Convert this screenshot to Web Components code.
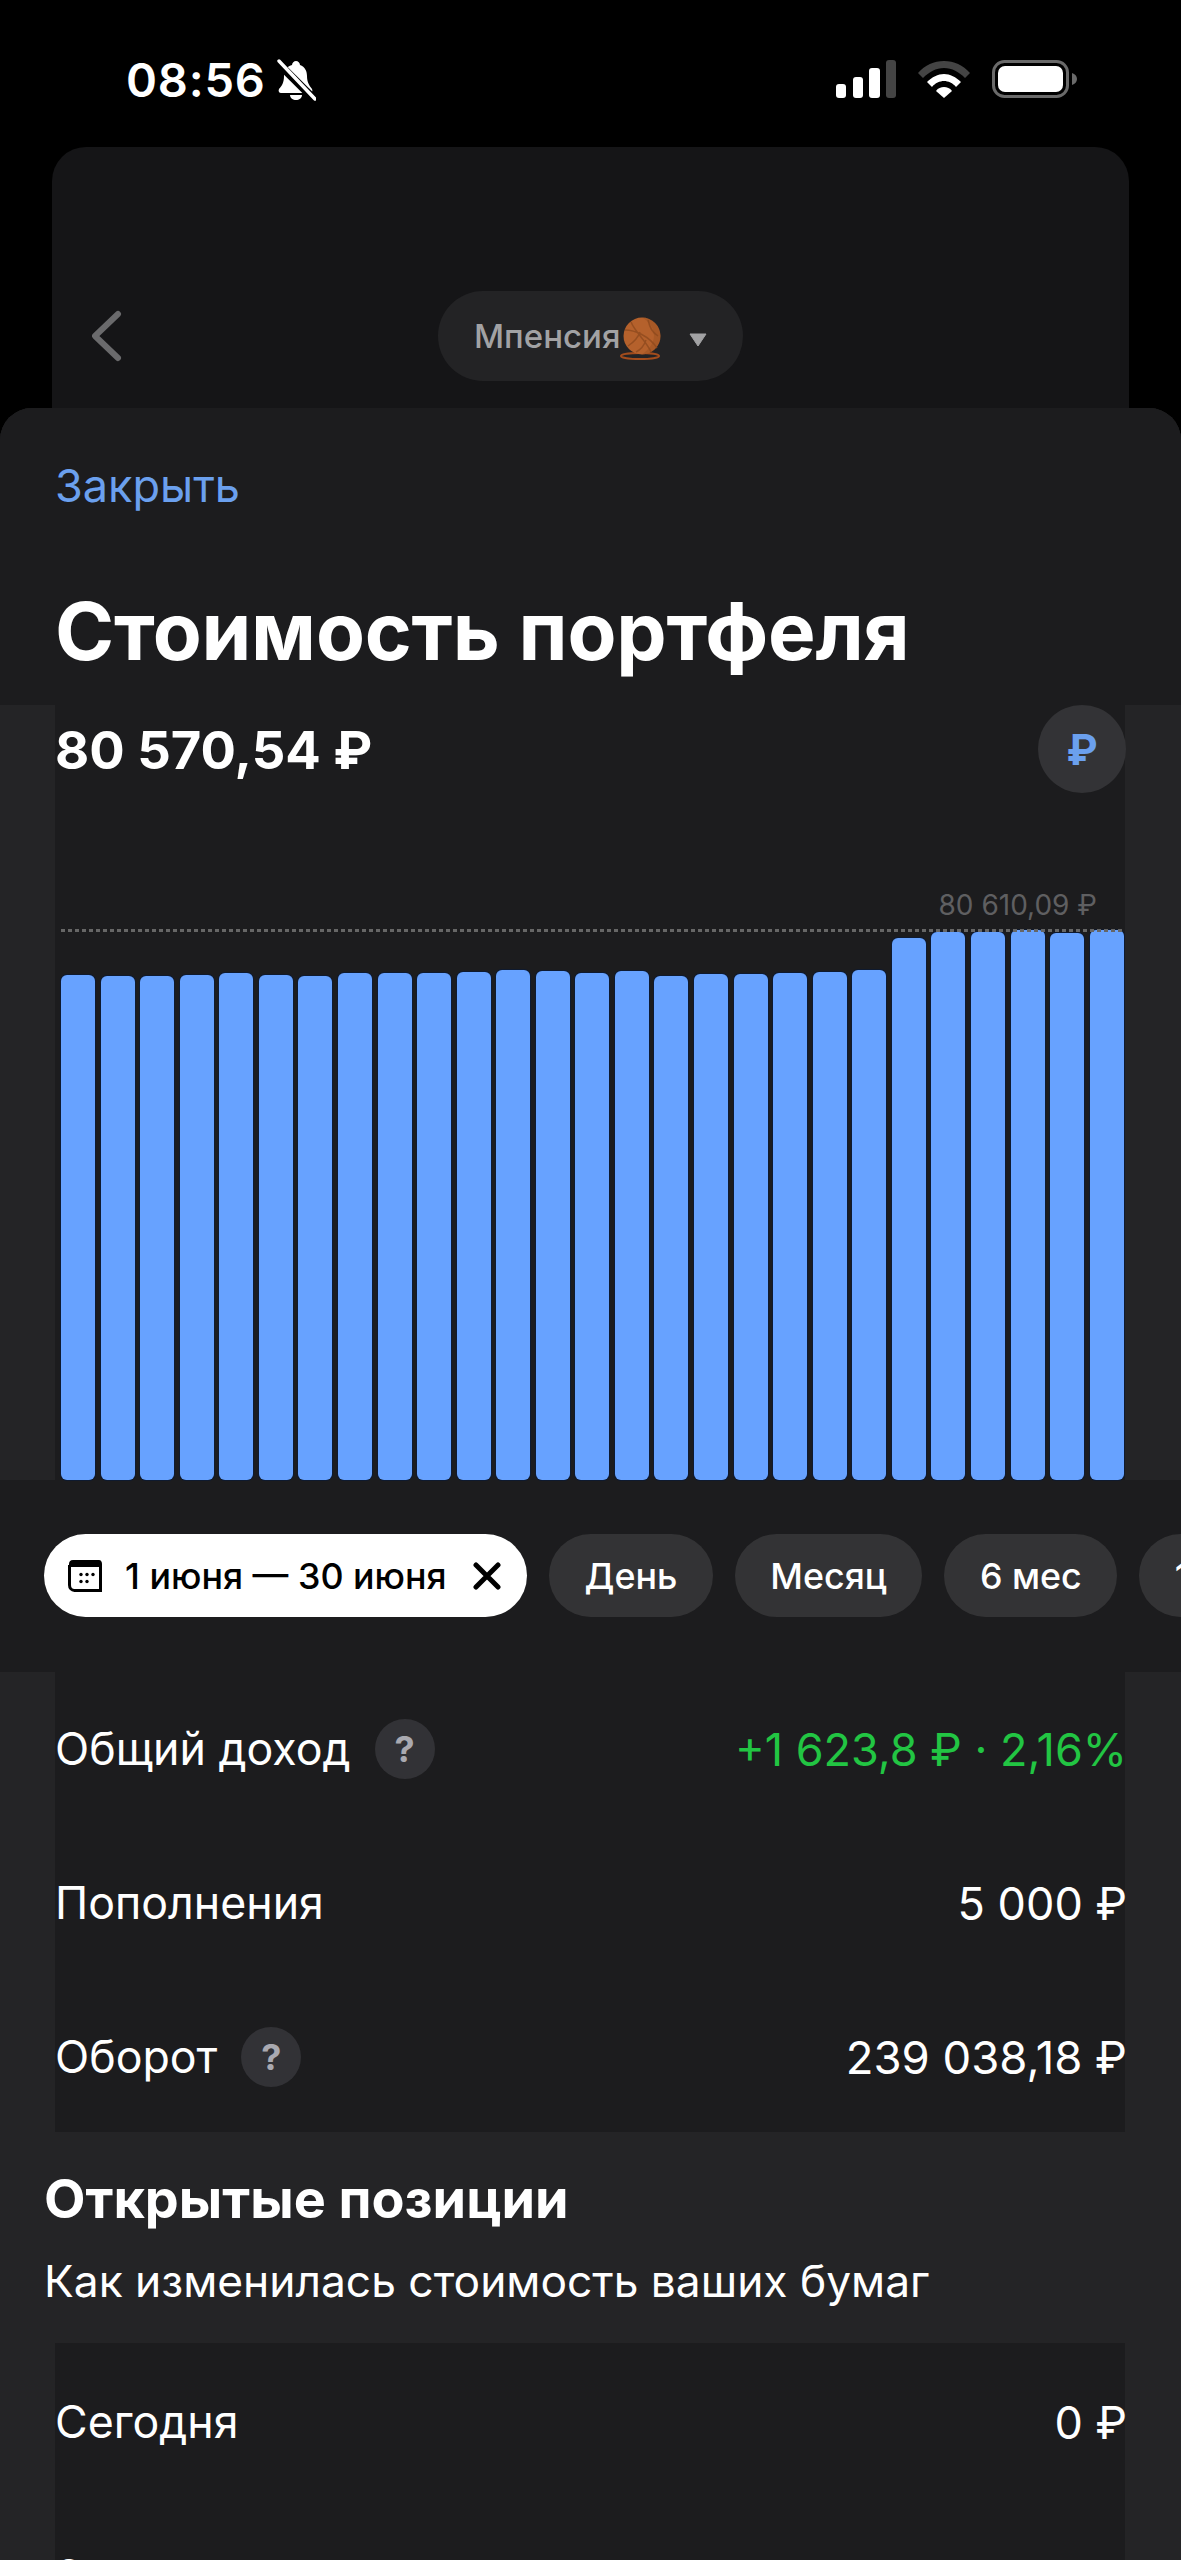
<!DOCTYPE html>
<html lang="ru">
<head>
<meta charset="utf-8">
<title>Стоимость портфеля</title>
<style>
  html, body {
    margin: 0;
    background: #000;
    font-family: Inter, "Liberation Sans", sans-serif;
    color: #fff;
  }
  body {
    width: 1181px;
    height: 2560px;
    overflow: hidden;
  }
</style>
</head>
<body>
<status-bar></status-bar>
<back-screen>Мпенсия</back-screen>
<portfolio-sheet>
  <sheet-head>Стоимость портфеля</sheet-head>
  <value-chart amount="80 570,54 ₽" peak="80 610,09 ₽"></value-chart>
  <period-chips></period-chips>
  <row-card pad-top="0" height="460">
    <metric-row help value="+1 623,8 ₽ · 2,16%" tone="up">Общий доход</metric-row>
    <metric-row value="5 000 ₽">Пополнения</metric-row>
    <metric-row help value="239 038,18 ₽" wide>Оборот</metric-row>
  </row-card>
  <section-title sub="Как изменилась стоимость ваших бумаг">Открытые позиции</section-title>
  <row-card pad-top="2" height="400">
    <metric-row value="0 ₽">Сегодня</metric-row>
    <metric-row value="6 087,19 ₽" tone="up">За все время</metric-row>
  </row-card>
</portfolio-sheet>

<script>
class StatusBar extends HTMLElement {
  constructor() {
    super();
    this.attachShadow({ mode: 'open' });
  }

  connectedCallback() {
    this.shadowRoot.innerHTML = `
      <style>
        :host {
          display: flex;
          justify-content: space-between;
          align-items: flex-start;
          height: 147px;
          box-sizing: border-box;
          padding: 54px 103px 0 126px;
          background: #000;
        }
        .time {
          display: flex;
          align-items: center;
          gap: 10px;
          font-size: 47px;
          line-height: 52px;
          font-weight: 600;
          letter-spacing: 0.8px;
        }
        .icons {
          display: flex;
          align-items: center;
          gap: 22px;
          padding-top: 6px;
        }
        svg { display: block; }
      </style>
      <div class="time">
        <span>08:56</span>
        <svg width="40" height="42" viewBox="0 0 40 42">
          <path fill="#fff" d="M20 2c2 0 4 2 4 4 5 2 7 6 7 11 0 6 2 9 5 13 1 2 0 4-2 4H5c-2 0-3-2-2-4 3-3 5-7 5-13 0-5 2-9 8-11 0-2 2-4 4-4z"/>
          <path fill="#fff" d="M14 36h12c0 3-3 5-6 5s-6-2-6-5z"/>
          <path stroke="#000" stroke-width="8" d="M1 3l38 38"/>
          <path stroke="#fff" stroke-width="3.4" stroke-linecap="round" d="M3 2l36 38"/>
        </svg>
      </div>
      <div class="icons">
        <svg width="60" height="38" viewBox="0 0 60 38">
          <rect x="0" y="24" width="10" height="14" rx="3" fill="#fff"/>
          <rect x="17" y="17" width="10" height="21" rx="3" fill="#fff"/>
          <rect x="33" y="8" width="11" height="30" rx="3" fill="#fff"/>
          <rect x="50" y="0" width="10" height="38" rx="3" fill="#444"/>
        </svg>
        <svg width="52" height="38" viewBox="0 0 52 38">
          <path fill="#444" d="M0 13C7 5 16 1 26 1s19 4 26 12l-5 5C41 12 34 8 26 8S11 12 5 18z"/>
          <path fill="#fff" d="M9 22c5-5 11-8 17-8s12 3 17 8l-5 5c-3-4-8-6-12-6s-9 2-12 6z"/>
          <path fill="#fff" d="M18 31c2-3 5-4 8-4s6 1 8 4l-8 7z"/>
        </svg>
        <svg width="86" height="38" viewBox="0 0 86 38">
          <rect x="1.5" y="1.5" width="74" height="35" rx="11" fill="none" stroke="#6a6a6a" stroke-width="3"/>
          <rect x="6" y="6" width="65" height="26" rx="7" fill="#fff"/>
          <path fill="#6a6a6a" d="M80 13c3 1 5 3 5 6s-2 5-5 6z"/>
        </svg>
      </div>
    `;
  }
}

class BackScreen extends HTMLElement {
  constructor() {
    super();
    this.attachShadow({ mode: 'open' });
  }

  connectedCallback() {
    this.shadowRoot.innerHTML = `
      <style>
        :host {
          display: block;
          height: 261px;
          margin: 0 52px;
          box-sizing: border-box;
          padding-top: 144px;
          background: #151517;
          border-radius: 34px 34px 0 0;
        }
        .bar {
          display: grid;
          grid-template-columns: 1fr auto 1fr;
          align-items: center;
          padding: 0 40px;
        }
        .pill {
          display: flex;
          align-items: center;
          height: 90px;
          width: 305px;
          box-sizing: border-box;
          padding: 0 0 0 36px;
          border-radius: 45px;
          background: #232325;
          color: #a2a2a4;
          font-size: 33px;
          font-weight: 500;
        }
        svg { display: block; }
        .ball { margin-left: 0; margin-top: 4px; }
        .tri { margin-left: 27px; margin-top: 8px; }
      </style>
      <div class="bar">
        <svg width="30" height="52" viewBox="0 0 30 52">
          <path d="M26 4L3 26l23 22" fill="none" stroke="#6a6a6c" stroke-width="6" stroke-linecap="round" stroke-linejoin="round"/>
        </svg>
        <div class="pill">
          <span><slot></slot></span>
          <svg class="ball" width="42" height="44" viewBox="0 0 42 44">
            <ellipse cx="20" cy="40" rx="19" ry="3" fill="none" stroke="#a34c1c" stroke-width="2"/>
            <circle cx="22" cy="20" r="18.500" fill="#b5612c"/>
            <path d="M5 14c10 0 24 6 32 18M11 6c4 10 16 20 20 30M28 4c2 8 4 12 10 16M8 30c6-4 10-8 12-14M16 36c4-2 8-6 10-12" fill="none" stroke="#8f4a1e" stroke-width="1.500" opacity="0.8"/>
            <path d="M22 1.500a18.500 18.500 0 0 1 0 37c8-6 12-12 12-19S30 6 22 1.500z" fill="#8f4a1e" opacity="0.35"/>
          </svg>
          <svg class="tri" width="18" height="14" viewBox="0 0 18 14">
            <path d="M1 1h16L9 13z" fill="#a2a2a4" stroke="#a2a2a4" stroke-linejoin="round"/>
          </svg>
        </div>
        <span></span>
      </div>
    `;
  }
}

class PortfolioSheet extends HTMLElement {
  constructor() {
    super();
    this.attachShadow({ mode: 'open' });
  }

  connectedCallback() {
    this.shadowRoot.innerHTML = `
      <style>
        :host {
          display: block;
          height: 2152px;
          overflow: hidden;
          background: #242426;
          border-radius: 32px 32px 0 0;
        }
      </style>
      <slot></slot>
    `;
  }
}

class SheetHead extends HTMLElement {
  constructor() {
    super();
    this.attachShadow({ mode: 'open' });
  }

  connectedCallback() {
    this.shadowRoot.innerHTML = `
      <style>
        :host {
          display: block;
          height: 297px;
          box-sizing: border-box;
          padding: 49px 0 0 55px;
          background: #1c1c1e;
        }
        .close {
          font-size: 45px;
          line-height: 58px;
          color: #6ba0ee;
        }
        h1 {
          margin: 69px 0 0;
          font-size: 80px;
          line-height: 94px;
          font-weight: 700;
          letter-spacing: -0.2px;
          color: #fff;
        }
      </style>
      <div class="close">Закрыть</div>
      <h1><slot></slot></h1>
    `;
  }
}

class ValueChart extends HTMLElement {
  constructor() {
    super();
    this.attachShadow({ mode: 'open' });
  }

  connectedCallback() {
    const tops = [975, 976, 976, 975, 973, 975, 976, 973, 973, 973, 972, 970, 971, 973, 971, 976, 974, 974, 973, 972, 970, 938, 932, 932, 930, 933, 930];
    const bars = tops.map((t) => `<i style="height:${1480 - t}px"></i>`).join('');
    this.shadowRoot.innerHTML = `
      <style>
        :host {
          display: block;
          height: 775px;
          margin: 0 56px 0 55px;
          background: #1c1c1e;
        }
        .top {
          display: flex;
          justify-content: space-between;
          align-items: flex-start;
          height: 175px;
        }
        .amount {
          font-size: 52.600px;
          line-height: 60px;
          font-weight: 700;
          padding-top: 15px;
        }
        .cur {
          width: 88px;
          height: 88px;
          margin-right: -1px;
          border-radius: 50%;
          background: #333336;
          color: #6ba0ee;
          display: flex;
          align-items: center;
          justify-content: center;
          font-size: 42px;
          font-weight: 700;
        }
        .peak {
          height: 50px;
          box-sizing: border-box;
          padding-right: 28px;
          padding-top: 8px;
          text-align: right;
          font-size: 28px;
          line-height: 34px;
          color: #5f5f61;
        }
        .plot {
          height: 550px;
          display: flex;
          flex-direction: column;
          justify-content: flex-end;
          margin: 0 1px 0 6px;
          position: relative;
        }
        .line {
          position: absolute;
          top: -1px;
          left: 0;
          right: 0;
          height: 3px;
          background: repeating-linear-gradient(90deg, #666 0 4px, transparent 4px 7px);
        }
        .bars {
          display: flex;
          align-items: flex-end;
          justify-content: space-between;
        }
        i {
          display: block;
          width: 34px;
          background: #67a2ff;
          border-radius: 6px;
          box-shadow: 0 0 0 1px #0e1a30;
        }
      </style>
      <div class="top">
        <div class="amount">${this.getAttribute('amount')}</div>
        <div class="cur">₽</div>
      </div>
      <div class="peak">${this.getAttribute('peak')}</div>
      <div class="plot">
        <div class="line"></div>
        <div class="bars">${bars}</div>
      </div>
    `;
  }
}

class PeriodChips extends HTMLElement {
  constructor() {
    super();
    this.attachShadow({ mode: 'open' });
  }

  connectedCallback() {
    this.shadowRoot.innerHTML = `
      <style>
        :host {
          display: block;
          height: 192px;
          box-sizing: border-box;
          padding: 54px 0 0 44px;
          background: #1c1c1e;
          overflow: hidden;
        }
        .row {
          display: flex;
          gap: 22px;
          width: max-content;
        }
        .chip {
          display: flex;
          align-items: center;
          height: 83px;
          box-sizing: border-box;
          padding: 0 35.500px;
          border-radius: 42px;
          background: #333335;
          color: #fff;
          font-size: 35.800px;
          font-weight: 500;
        }
        .on {
          width: 483px;
          padding: 0 26px 0 23px;
          background: #fff;
          color: #000;
        }
        .on span {
          margin: 0 auto 0 22px;
        }
        svg { display: block; flex: none; }
      </style>
      <div class="row">
        <div class="chip on">
          <svg width="36" height="34" viewBox="0 0 36 34">
            <path d="M2 8V5c0-2 1-4 4-4h26c2 0 3 2 3 4v3z" fill="#000"/>
            <path d="M2.500 6v20c0 3 2 5.500 5 5.500h26V6" fill="none" stroke="#000" stroke-width="3"/>
            <g fill="#000">
              <circle cx="14" cy="15.500" r="1.700"/><circle cx="20" cy="15.500" r="1.700"/><circle cx="26" cy="15.500" r="1.700"/>
              <circle cx="14" cy="22.500" r="1.700"/><circle cx="20" cy="22.500" r="1.700"/>
            </g>
          </svg>
          <span>1 июня — 30 июня</span>
          <svg width="28" height="28" viewBox="0 0 28 28">
            <path d="M3 3l22 22M25 3L3 25" stroke="#000" stroke-width="5" stroke-linecap="round"/>
          </svg>
        </div>
        <div class="chip">День</div>
        <div class="chip">Месяц</div>
        <div class="chip">6 мес</div>
        <div class="chip">1 год</div>
      </div>
    `;
  }
}

class RowCard extends HTMLElement {
  constructor() {
    super();
    this.attachShadow({ mode: 'open' });
  }

  connectedCallback() {
    this.shadowRoot.innerHTML = `
      <style>
        :host {
          display: block;
          height: ${this.getAttribute('height')}px;
          box-sizing: border-box;
          margin: 0 56px 0 55px;
          padding-top: ${this.getAttribute('pad-top')}px;
          background: #1c1c1e;
        }
      </style>
      <slot></slot>
    `;
  }
}

class MetricRow extends HTMLElement {
  constructor() {
    super();
    this.attachShadow({ mode: 'open' });
  }

  connectedCallback() {
    const up = this.getAttribute('tone') === 'up';
    const wide = this.hasAttribute('wide');
    const help = this.hasAttribute('help') ? '<span class="help">?</span>' : '';
    this.shadowRoot.innerHTML = `
      <style>
        :host {
          display: flex;
          justify-content: space-between;
          align-items: center;
          height: 154px;
          font-size: 44.700px;
          color: #fff;
        }
        .label {
          display: flex;
          align-items: center;
          gap: 24px;
        }
        .help {
          width: 60px;
          height: 60px;
          border-radius: 50%;
          background: #323236;
          color: #a9a9b0;
          display: flex;
          align-items: center;
          justify-content: center;
          font-size: 36px;
          font-weight: 700;
        }
        .value {
          font-size: ${wide ? 45.5 : 45}px;
          margin-right: -2px;
          color: ${up ? '#22c543' : '#fff'};
        }
      </style>
      <div class="label"><slot></slot>${help}</div>
      <div class="value">${this.getAttribute('value')}</div>
    `;
  }
}

class SectionTitle extends HTMLElement {
  constructor() {
    super();
    this.attachShadow({ mode: 'open' });
  }

  connectedCallback() {
    this.shadowRoot.innerHTML = `
      <style>
        :host {
          display: block;
          height: 211px;
          box-sizing: border-box;
          padding: 36px 0 0 44px;
        }
        h2 {
          margin: 0;
          font-size: 53.900px;
          line-height: 62px;
          font-weight: 700;
        }
        p {
          margin: 21px 0 0;
          font-size: 44.300px;
          line-height: 60px;
        }
      </style>
      <h2><slot></slot></h2>
      <p>${this.getAttribute('sub')}</p>
    `;
  }
}

customElements.define('status-bar', StatusBar);
customElements.define('back-screen', BackScreen);
customElements.define('portfolio-sheet', PortfolioSheet);
customElements.define('sheet-head', SheetHead);
customElements.define('value-chart', ValueChart);
customElements.define('period-chips', PeriodChips);
customElements.define('row-card', RowCard);
customElements.define('metric-row', MetricRow);
customElements.define('section-title', SectionTitle);
</script>
</body>
</html>
